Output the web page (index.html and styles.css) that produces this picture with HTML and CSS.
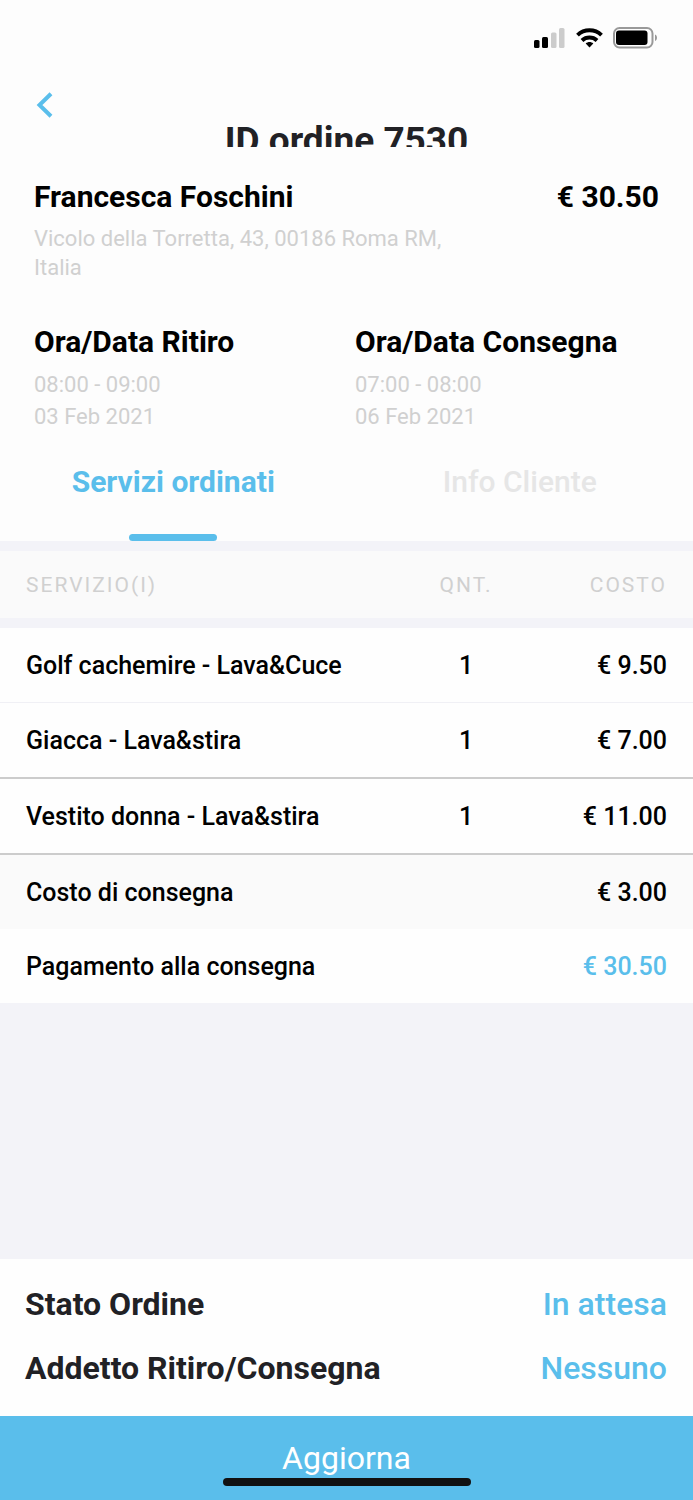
FILE: index.html
```html
<!DOCTYPE html>
<html lang="it">
<head>
<meta charset="utf-8">
<meta name="viewport" content="width=device-width, initial-scale=1">
<title>ID ordine 7530</title>
<link rel="stylesheet" href="styles.css">
</head>
<body>
<div class="screen">
  <header class="header">
    <div class="status-bar">
      <svg class="signal" viewBox="0 0 32 20" aria-hidden="true"><rect x="0" y="12" width="5.500" height="8" rx="1.500"/><rect x="8" y="9" width="6" height="11" rx="1.500"/><rect class="dim" x="17" y="4.500" width="5.500" height="15.500" rx="1.500"/><rect class="dim" x="25" y="0" width="5.500" height="20" rx="1.500"/></svg>
      <svg class="wifi" viewBox="0 0 27 20" aria-hidden="true"><path class="wave" d="M1.500 7.100A17.500 17.500 0 0 1 25.500 7.100M6 12.500A11 11 0 0 1 21 12.500"/><path d="M9.700 15.600C11.800 13.600 15.200 13.600 17.300 15.600L13.500 19.600z"/></svg>
      <svg class="battery" viewBox="0 0 44 22" aria-hidden="true"><rect class="shell" x="1" y="1" width="38.500" height="19.500" rx="5.500"/><rect x="3" y="3.500" width="31.500" height="14.500" rx="3"/><path class="dim-tip" d="M42 7.500v6.500c1.300-.6 2-1.800 2-3.200s-.7-2.700-2-3.300z"/></svg>
    </div>
    <button class="back" aria-label="Indietro"><svg viewBox="0 0 18 26" aria-hidden="true"><path d="M15 1.800 3.500 13 15 24.200"/></svg></button>
    <h1 class="title">ID ordine 7530</h1>
  </header>
  <main class="main">
    <section class="customer">
      <div class="customer-text">
        <h2 class="heading">Francesca Foschini</h2>
        <p class="address">Vicolo della Torretta, 43, 00186 Roma RM, Italia</p>
      </div>
      <strong class="heading">€ 30.50</strong>
    </section>
    <section class="schedule">
      <div><h2 class="heading">Ora/Data Ritiro</h2><p class="when">08:00 - 09:00<br>03 Feb 2021</p></div>
      <div><h2 class="heading">Ora/Data Consegna</h2><p class="when">07:00 - 08:00<br>06 Feb 2021</p></div>
    </section>
    <nav class="tabs" role="tablist">
      <button class="tab active" role="tab" aria-selected="true">Servizi ordinati</button>
      <button class="tab" role="tab" aria-selected="false">Info Cliente</button>
    </nav>
    <table class="services">
      <thead><tr><th class="name">SERVIZIO(I)</th><th class="qty">QNT.</th><th class="cost">COSTO</th></tr></thead>
      <tbody>
        <tr class="item light"><td>Golf cachemire - Lava&amp;Cuce</td><td class="qty">1</td><td class="cost">€ 9.50</td></tr>
        <tr class="item"><td>Giacca - Lava&amp;stira</td><td class="qty">1</td><td class="cost">€ 7.00</td></tr>
        <tr class="item"><td>Vestito donna - Lava&amp;stira</td><td class="qty">1</td><td class="cost">€ 11.00</td></tr>
        <tr class="delivery"><td colspan="2">Costo di consegna</td><td class="cost">€ 3.00</td></tr>
        <tr class="payment"><td colspan="2">Pagamento alla consegna</td><td class="cost">€ 30.50</td></tr>
      </tbody>
    </table>
  </main>
  <footer class="footer">
    <div class="state"><span>Stato Ordine</span><button class="link">In attesa</button></div>
    <div class="state"><span>Addetto Ritiro/Consegna</span><button class="link">Nessuno</button></div>
  </footer>
  <button class="update">Aggiorna<span class="home-bar"></span></button>
</div>
</body>
</html>
```
FILE: styles.css
```css
* { box-sizing: border-box; }
body { margin: 0; background: #f3f3f8; color: #000; font-family: Roboto, sans-serif; }
button { padding: 0; border: 0; background: none; font: inherit; cursor: pointer; }
h1, h2, p { margin: 0; }
.screen { display: flex; flex-direction: column; min-height: 100vh; }
.header { background: #fdfdfd; padding: 28px 36px 0; }
.status-bar { display: flex; justify-content: flex-end; align-items: center; gap: 10px; height: 20px; }
.signal { width: 32px; height: 20px; }
.wifi { width: 27px; height: 20px; }
.battery { width: 44px; height: 22px; }
.wave { fill: none; stroke: #000; stroke-width: 4; }
.dim { fill: #ccc; }
.shell { fill: none; stroke: #999; stroke-width: 2; }
.dim-tip { fill: #999; }
.back { display: block; width: 18px; height: 26px; margin-top: 44px; }
.back svg { display: block; width: 18px; height: 26px; fill: none; stroke: #5abeeb; stroke-width: 4; }
.title { height: 29px; overflow: hidden; color: #212125; font-size: 37px; line-height: 45px; font-weight: 700; text-align: center; }
.main { flex: 1; }
.customer, .schedule { background: #fdfdfd; padding: 0 34px; }
.customer { display: flex; justify-content: space-between; padding-top: 32px; }
.customer-text { width: 66%; }
.heading { font-size: 30px; line-height: 36px; font-weight: 700; }
.address, .when { color: #d0d0d0; font-size: 22px; font-weight: 400; }
.address { margin-top: 9px; line-height: 29px; }
.schedule { display: grid; grid-template-columns: 321px 1fr; padding-top: 42px; }
.when { margin-top: 9px; line-height: 32px; }
.tabs { display: grid; grid-template-columns: 1fr 1fr; background: #fdfdfd; border-bottom: 10px solid #f3f3f8; }
.tab { position: relative; height: 108px; padding-bottom: 11px; color: #e6e6e6; font-size: 30px; font-weight: 500; }
.active { color: #5abeeb; font-weight: 700; }
.active::after { content: ""; position: absolute; bottom: 0; left: 50%; width: 88px; height: 7px; margin-left: -44px; border-radius: 4px; background: #5abeeb; }
.services { width: 100%; border-collapse: separate; border-spacing: 0; table-layout: fixed; background: #fefefe; font-size: 25px; font-weight: 500; }
.services th { height: 77px; padding: 0 0 0 26px; background: #fafafa; border-bottom: 10px solid #f3f3f8; color: #d0d0d0; font-size: 21px; font-weight: 400; letter-spacing: 2px; text-align: left; }
.services td { height: 74px; padding: 0 0 0 26px; }
.services .qty { width: 132px; padding: 0; text-align: center; }
.services .cost { width: 161px; padding: 0 26px 0 0; text-align: right; }
.services .item td { height: 76px; border-bottom: 2px solid #ccc; }
.services .light td { height: 75px; border-bottom: 1px solid #f0f0f5; }
.delivery { background: #fafafa; }
.payment .cost { color: #5abeeb; }
.footer { background: #fefefe; padding: 13px 26px 16px 25px; }
.state { display: flex; align-items: center; justify-content: space-between; height: 64px; color: #212125; font-size: 32px; font-weight: 700; }
.link { color: #5abeeb; font-weight: 500; }
.update { position: relative; width: 100%; height: 84px; background: #5abeeb; color: #fff; font-size: 32px; font-weight: 400; }
.home-bar { position: absolute; bottom: 14px; left: 50%; width: 248px; height: 8px; margin-left: -124px; border-radius: 4px; background: #111; }
```
